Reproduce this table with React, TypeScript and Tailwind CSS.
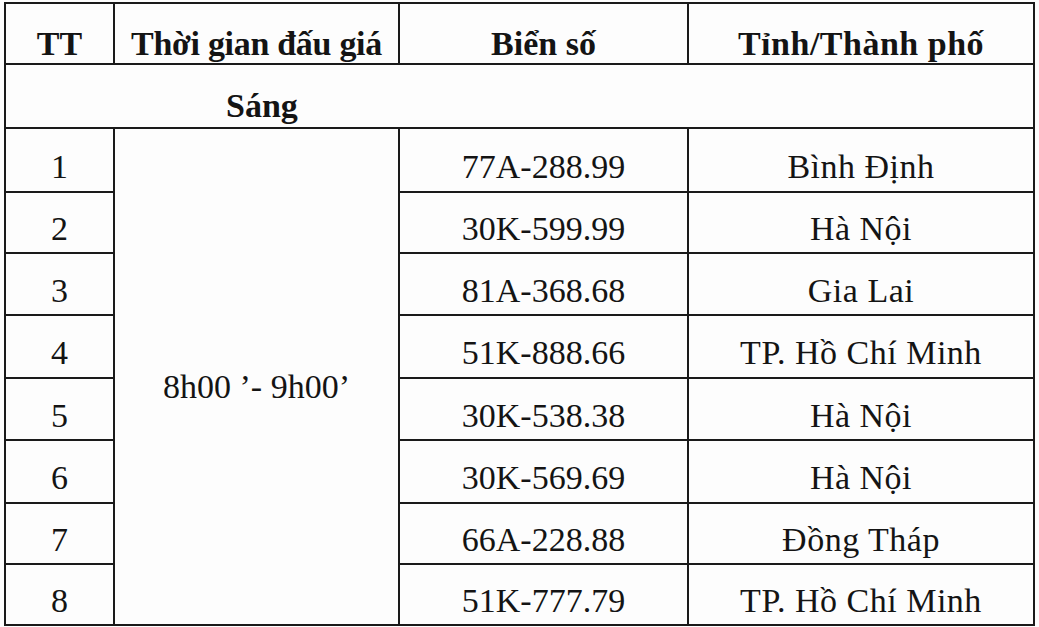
const rows = [
  { tt: "1", plate: "77A-288.99", city: "Bình Định", h: "h-[64px]" },
  { tt: "2", plate: "30K-599.99", city: "Hà Nội", h: "h-[61px]" },
  { tt: "3", plate: "81A-368.68", city: "Gia Lai", h: "h-[62px]" },
  { tt: "4", plate: "51K-888.66", city: "TP. Hồ Chí Minh", h: "h-[63px]" },
  { tt: "5", plate: "30K-538.38", city: "Hà Nội", h: "h-[62px]" },
  { tt: "6", plate: "30K-569.69", city: "Hà Nội", h: "h-[63px]" },
  { tt: "7", plate: "66A-228.88", city: "Đồng Tháp", h: "h-[61px]" },
  { tt: "8", plate: "51K-777.79", city: "TP. Hồ Chí Minh", h: "h-[61px]" },
]

const cell = "border-2 border-[#1a1a1a] text-center align-middle px-0 pb-0"

export default function App() {
  return (
    <div className="min-h-screen w-full bg-[#fdfdfd] pl-[4px] pt-[2px] font-['Liberation_Serif','Times_New_Roman',serif] text-[#141414]">
      <table className="table-fixed border-collapse w-[1029px] text-[34px] leading-none">
        <colgroup>
          <col className="w-[109px]" />
          <col className="w-[285px]" />
          <col className="w-[289px]" />
          <col className="w-[346px]" />
        </colgroup>
        <thead>
          <tr className="h-[61px] font-bold text-[34px]">
            <th className={`${cell} pt-[20px]`}>TT</th>
            <th className={`${cell} pt-[20px] tracking-[-0.3px]`}>Thời gian đấu giá</th>
            <th className={`${cell} pt-[20px]`}>Biển số</th>
            <th className={`${cell} pt-[20px] tracking-[0.5px]`}>Tỉnh/Thành phố</th>
          </tr>
        </thead>
        <tbody>
          <tr className="h-[64px]">
            <td colSpan={4} className={`${cell} pt-[20px] text-left font-bold text-[34px] pl-[220px]`}>
              Sáng
            </td>
          </tr>
          {rows.map((r, i) => (
            <tr key={r.tt} className={r.h}>
              <td className={`${cell} pt-[13px]`}>{r.tt}</td>
              {i === 0 && (
                <td rowSpan={rows.length} className={`${cell} pt-[20px]`}>
                  8h00 &rsquo;- 9h00&rsquo;
                </td>
              )}
              <td className={`${cell} pt-[13px]`}>{r.plate}</td>
              <td className={`${cell} pt-[13px] tracking-[0.5px]`}>{r.city}</td>
            </tr>
          ))}
        </tbody>
      </table>
    </div>
  )
}
